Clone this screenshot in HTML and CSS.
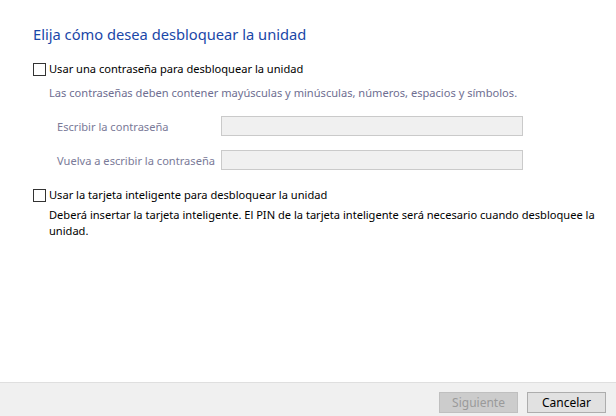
FILE: index.html
```html
<!DOCTYPE html>
<html lang="es">
<head>
    <meta charset="UTF-8">
    <meta name="viewport" content="width=device-width, initial-scale=1.0">
    <title>Cifrado de unidad BitLocker</title>
    <link rel="stylesheet" href="styles.css">
</head>
<body>

<div class="wizard">
    <div class="content">
        <h1 class="title">Elija cómo desea desbloquear la unidad</h1>

        <label class="option">
            <span class="check"></span>
            <span>Usar una contraseña para desbloquear la unidad</span>
        </label>
        <p class="hint">Las contraseñas deben contener mayúsculas y minúsculas, números, espacios y símbolos.</p>

        <div class="fields">
            <div class="field">
                <span class="field-label">Escribir la contraseña</span>
                <span class="field-input"></span>
            </div>
            <div class="field">
                <span class="field-label">Vuelva a escribir la contraseña</span>
                <span class="field-input"></span>
            </div>
        </div>

        <label class="option option-card">
            <span class="check"></span>
            <span>Usar la tarjeta inteligente para desbloquear la unidad</span>
        </label>
        <p class="note">Deberá insertar la tarjeta inteligente. El PIN de la tarjeta inteligente será necesario cuando desbloquee la unidad.</p>
    </div>

    <div class="footer">
        <button class="btn" disabled>Siguiente</button>
        <button class="btn">Cancelar</button>
    </div>
</div>

</body>
</html>
```

FILE: styles.css
```css
body {
    margin: 0;
    font-family: "Noto Sans", "Open Sans", sans-serif;
    font-size: 11.1px;
    color: #000;
    background-color: #fff;
}
.wizard {
    height: 416px;
    display: flex;
    flex-direction: column;
}
.content {
    flex-grow: 1;
    padding: 23px 18px 0 33px;
}
.title {
    margin: 0;
    font-size: 14.7px;
    font-weight: normal;
    color: #1a47a8;
    line-height: 22px;
}
.option {
    display: flex;
    align-items: center;
    gap: 3px;
    margin-top: 16px;
    line-height: 16px;
}
.check {
    width: 11px;
    height: 11px;
    border: 1px solid #333;
    background-color: #fff;
}
.hint {
    margin: 8px 0 0 16px;
    color: #6e6e91;
    line-height: 16px;
}
.fields {
    margin: 15px 0 0 24px;
    display: flex;
    flex-direction: column;
    gap: 14px;
}
.field {
    display: flex;
    align-items: center;
}
.field-label {
    width: 164px;
    white-space: nowrap;
    color: #7a7a98;
}
.field-input {
    width: 300px;
    height: 18px;
    border: 1px solid #cacaca;
    background-color: #f0f0f0;
}
.option-card {
    margin-top: 17px;
}
.note {
    margin: 4px 0 0 16px;
    line-height: 16px;
}
.footer {
    height: 34px;
    border-top: 1px solid #dfdfdf;
    background-color: #f0f0f0;
    display: flex;
    justify-content: flex-end;
    align-items: flex-start;
    gap: 9px;
    padding: 9px 10px 0 0;
    box-sizing: border-box;
}
.btn {
    width: 79px;
    height: 21px;
    padding: 0;
    font-family: inherit;
    font-size: 12px;
    background-color: #e1e1e1;
    border: 1px solid #adadad;
    color: #000;
}
.btn:disabled {
    background-color: #cccccc;
    border-color: #bfbfbf;
    color: #9a9a9a;
}
```
